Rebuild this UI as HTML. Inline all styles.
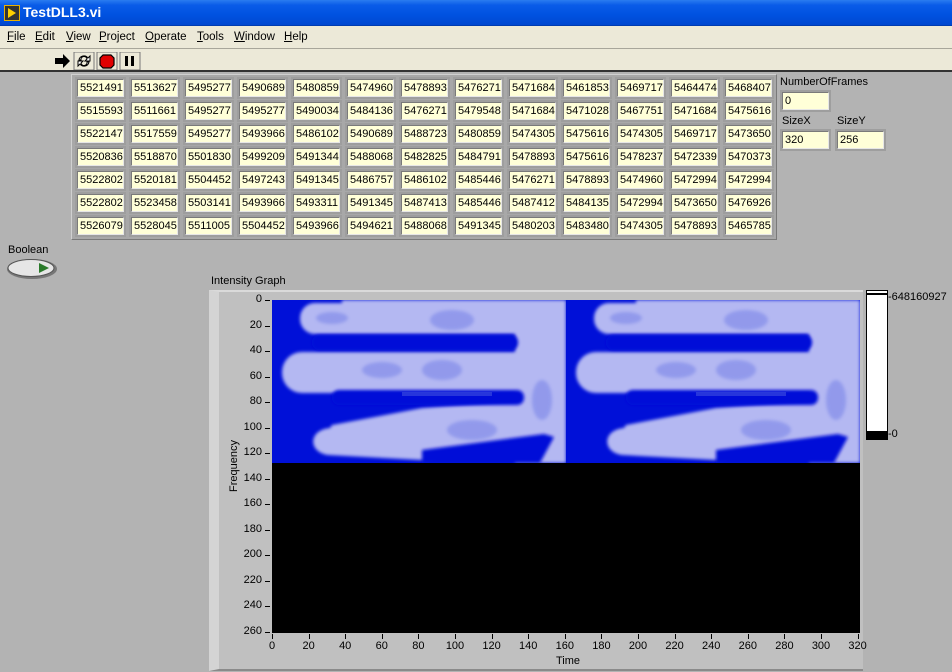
<!DOCTYPE html>
<html><head><style>
*{margin:0;padding:0;box-sizing:border-box}
body{width:952px;height:672px;overflow:hidden;background:#b3b3b3;font-family:"Liberation Sans",sans-serif;font-size:11px;color:#000;position:relative}
.abs{position:absolute}
#title{left:0;top:0;width:952px;height:26px;background:linear-gradient(#2a7cf0 0%,#0a5ce8 20%,#0052e0 60%,#0048d0 100%);border-bottom:1px solid #003cb0}
#title span{position:absolute;left:23px;top:4px;color:#fff;font-weight:bold;font-size:14px}
#menu{left:0;top:26px;width:952px;height:23px;background:#ece9d8;border-bottom:1px solid #a8a69a}
#menu span{position:absolute;top:5px;font-size:11.5px}
#tool{left:0;top:49px;width:952px;height:23px;background:#ece9d8;border-bottom:2px solid #333}
.cell{position:absolute;width:47px;height:18px;background:#ffffd8;border:1px solid;border-color:#7a7a7a #e6e6e6 #e6e6e6 #7a7a7a;font-size:11px;line-height:16px;padding-left:2px;box-shadow:0 0 0 2px #9e9e9e}
#arr{left:71px;top:74px;width:706px;height:166px;background:#a8a8a8;border:1px solid;border-color:#d0d0d0 #7a7a7a #7a7a7a #d0d0d0}
.yl{position:absolute;width:40px;text-align:right;font-size:11px}
.xl{position:absolute;width:30px;text-align:center;font-size:11px}
</style></head><body>
<div id="title" class="abs">
<svg class="abs" style="left:4px;top:5px" width="16" height="16"><rect x="0" y="0" width="16" height="16" fill="#e8b000"/><rect x="1" y="1" width="14" height="14" fill="#333"/><path d="M4 3 L12 8 L4 13Z" fill="#ffd000"/></svg>
<span>TestDLL3.vi</span></div>
<div id="menu" class="abs">
<span style="left:7px"><u>F</u>ile</span><span style="left:35px"><u>E</u>dit</span><span style="left:66px"><u>V</u>iew</span><span style="left:99px"><u>P</u>roject</span><span style="left:145px"><u>O</u>perate</span><span style="left:197px"><u>T</u>ools</span><span style="left:234px"><u>W</u>indow</span><span style="left:284px"><u>H</u>elp</span>
</div>
<div id="tool" class="abs">
<svg class="abs" style="left:54px;top:3px" width="90" height="18">
<path d="M1 6h8V2l7 7-7 7v-4H1z" fill="#000"/>
<rect x="20" y="0" width="20" height="18" fill="#ece9d8" stroke="#777"/>
<path d="M25 8a5 5 0 0 1 9-2l2-2v5h-5l2-2a3 3 0 0 0-6 1zM35 10a5 5 0 0 1-9 2l-2 2v-5h5l-2 2a3 3 0 0 0 6-1z" fill="#fff" stroke="#000" stroke-width="1"/>
<rect x="43" y="0" width="20" height="18" fill="#ece9d8" stroke="#777"/>
<path d="M49 3h8l3 3v7l-3 3h-8l-3-3V6z" fill="#e00000" stroke="#000" stroke-width="1.2"/>
<rect x="66" y="0" width="20" height="18" fill="#ece9d8" stroke="#777"/>
<rect x="71" y="4" width="3" height="10" fill="#000"/><rect x="77" y="4" width="3" height="10" fill="#000"/>
</svg>
</div>
<div id="arr" class="abs"></div>
<div id="cells"></div>
<div class="abs" style="left:780px;top:76px">NumberOfFrames</div>
<div class="cell" style="left:782px;top:92px">0</div>
<div class="abs" style="left:782px;top:115px">SizeX</div>
<div class="abs" style="left:837px;top:115px">SizeY</div>
<div class="cell" style="left:782px;top:131px">320</div>
<div class="cell" style="left:837px;top:131px">256</div>
<div class="abs" style="left:8px;top:244px">Boolean</div>
<svg class="abs" style="left:6px;top:258px" width="54" height="24"><ellipse cx="26" cy="11" rx="25" ry="10" fill="#777"/><ellipse cx="25" cy="10" rx="23" ry="8.5" fill="#e6e6e6" stroke="#555"/><path d="M33 5l10 5-10 5z" fill="#2a7a2a"/></svg>
<div class="abs" style="left:211px;top:275px">Intensity Graph</div>
<div class="abs" style="left:209px;top:290px;width:654px;height:381px;background:#c0c0c0;border-left:10px solid #d4d4d4;border-top:2px solid #dadada;border-bottom:2px solid #8a8a8a"></div>
<svg class="abs" style="left:272px;top:300px" width="588" height="333">
<defs><filter id="b"><feGaussianBlur stdDeviation="1.5"/></filter>
<g id="h">
<rect width="294" height="163" fill="#0010d8"/>
<g filter="url(#b)" fill="#b4b8f2">
<rect x="243" y="0" width="51" height="163"/>
<rect x="70" y="0" width="200" height="3"/>
<rect x="28" y="3" width="250" height="31" rx="15"/>
<rect x="10" y="52" width="270" height="41" rx="20"/>
<path d="M58 128 C36 130 36 152 56 155 L150 160 L240 150 L265 136 L260 100 L150 108 L60 125Z"/>
</g>
<g filter="url(#b)" fill="#0010d8">
<rect x="40" y="35" width="206" height="15" rx="7"/>
<rect x="60" y="90" width="192" height="15" rx="7"/>
<path d="M150 163 L268 163 L282 137 L272 134 L150 150Z"/>
</g>
<g fill="#7c86e8" opacity="0.6" filter="url(#b)">
<ellipse cx="180" cy="20" rx="22" ry="10"/><ellipse cx="60" cy="18" rx="16" ry="6"/><ellipse cx="170" cy="70" rx="20" ry="10"/><ellipse cx="200" cy="130" rx="25" ry="10"/><ellipse cx="270" cy="100" rx="10" ry="20"/><ellipse cx="110" cy="70" rx="20" ry="8"/>
</g>
<rect x="130" y="92" width="90" height="4" fill="#4050e0" opacity=".6"/>
</g></defs>
<use href="#h"/><use href="#h" x="294"/>
<rect y="163" width="588" height="170" fill="#000"/>
</svg>
<div id="axes"></div>
<div class="abs" style="left:228px;top:492px;transform:rotate(-90deg);transform-origin:0 0;font-size:11px">Frequency</div>
<div class="abs" style="left:556px;top:655px">Time</div>
<div class="abs" style="left:866px;top:290px;width:22px;height:150px;background:#fff;border:1px solid #000"></div>
<div class="abs" style="left:867px;top:293px;width:20px;height:2px;background:#000"></div>
<div class="abs" style="left:867px;top:431px;width:20px;height:8px;background:#000"></div>
<div class="abs" style="left:888px;top:291px">-648160927</div>
<div class="abs" style="left:888px;top:428px">-0</div>
<script>
var d=[[5521491,5513627,5495277,5490689,5480859,5474960,5478893,5476271,5471684,5461853,5469717,5464474,5468407],
[5515593,5511661,5495277,5495277,5490034,5484136,5476271,5479548,5471684,5471028,5467751,5471684,5475616],
[5522147,5517559,5495277,5493966,5486102,5490689,5488723,5480859,5474305,5475616,5474305,5469717,5473650],
[5520836,5518870,5501830,5499209,5491344,5488068,5482825,5484791,5478893,5475616,5478237,5472339,5470373],
[5522802,5520181,5504452,5497243,5491345,5486757,5486102,5485446,5476271,5478893,5474960,5472994,5472994],
[5522802,5523458,5503141,5493966,5493311,5491345,5487413,5485446,5487412,5484135,5472994,5473650,5476926],
[5526079,5528045,5511005,5504452,5493966,5494621,5488068,5491345,5480203,5483480,5474305,5478893,5465785]];
var h='';for(var r=0;r<7;r++)for(var c=0;c<13;c++)h+='<div class="cell" style="left:'+(77+c*54)+'px;top:'+(79+r*23)+'px">'+d[r][c]+'</div>';
document.getElementById('cells').innerHTML=h;
var a='';for(var i=0;i<=13;i++){var y=300+i*25.5;a+='<div class="yl" style="left:222px;top:'+(y-7)+'px">'+(i*20)+'</div><div class="abs" style="left:265px;top:'+Math.round(y)+'px;width:5px;height:1px;background:#000"></div>';}
for(var i=0;i<=16;i++){var x=272+i*36.6;a+='<div class="xl" style="left:'+(x-15)+'px;top:640px">'+(i*20)+'</div><div class="abs" style="left:'+Math.round(x)+'px;top:634px;width:1px;height:5px;background:#000"></div>';}
document.getElementById('axes').innerHTML=a;
</script>
</body></html>
